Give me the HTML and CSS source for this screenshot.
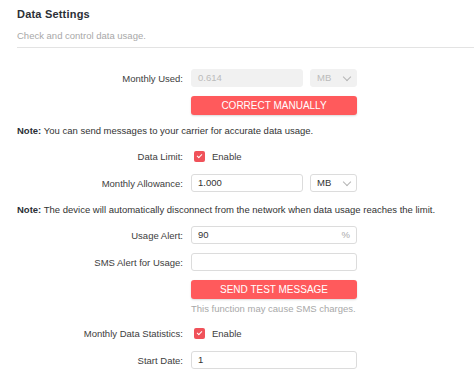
FILE: index.html
```html
<!DOCTYPE html>
<html lang="en">
<head>
    <meta charset="UTF-8">
    <meta name="viewport" content="width=device-width, initial-scale=1.0">
    <title>Data Settings</title>
    <link rel="stylesheet" href="styles.css">
</head>
<body>

    <!-- Header -->
    <div class="head">
        <h2>Data Settings</h2>
        <p class="sub">Check and control data usage.</p>
    </div>

    <div class="form">
        <div class="row">
            <label>Monthly Used:</label>
            <div class="ctrl">
                <div class="input small disabled">0.614</div>
                <div class="select disabled">MB <span class="chev"></span></div>
            </div>
        </div>
        <div class="row">
            <label></label>
            <div class="ctrl"><button class="button">CORRECT MANUALLY</button></div>
        </div>

        <p class="note note1"><b>Note:</b> You can send messages to your carrier for accurate data usage.</p>

        <div class="row">
            <label>Data Limit:</label>
            <div class="ctrl"><span class="check"></span> Enable</div>
        </div>
        <div class="row">
            <label>Monthly Allowance:</label>
            <div class="ctrl">
                <div class="input small">1.000</div>
                <div class="select">MB <span class="chev"></span></div>
            </div>
        </div>

        <p class="note note2"><b>Note:</b> The device will automatically disconnect from the network when data usage reaches the limit.</p>

        <div class="row">
            <label>Usage Alert:</label>
            <div class="ctrl"><div class="input">90 <span class="unit">%</span></div></div>
        </div>
        <div class="row">
            <label>SMS Alert for Usage:</label>
            <div class="ctrl"><div class="input"></div></div>
        </div>
        <div class="row">
            <label></label>
            <div class="ctrl"><button class="button">SEND TEST MESSAGE</button></div>
        </div>
        <div class="row hint-row">
            <label></label>
            <div class="ctrl hint">This function may cause SMS charges.</div>
        </div>

        <div class="row">
            <label>Monthly Data Statistics:</label>
            <div class="ctrl"><span class="check"></span> Enable</div>
        </div>
        <div class="row">
            <label>Start Date:</label>
            <div class="ctrl"><div class="input">1</div></div>
        </div>
    </div>

</body>
</html>
```

FILE: styles.css
```css
body {
    margin: 0;
    padding: 0 0 0 17px;
    background: #ffffff;
    font-family: "Liberation Sans", Arial, sans-serif;
    font-size: 9.5px;
    color: #333333;
}

/* header */
.head {
    border-bottom: 1px solid #e3e3e3;
    padding-top: 7px;
    height: 40px;
}
.head h2 {
    margin: 0;
    font-size: 11px;
    line-height: 14px;
    font-weight: bold;
    color: #2b2f36;
    letter-spacing: 0.2px;
}
.sub {
    margin: 8px 0 0;
    line-height: 14px;
    color: #a8a8a8;
}

/* form rows */
.form {
    display: flex;
    flex-direction: column;
    gap: 9px;
    padding-top: 21px;
}
.row {
    display: flex;
    align-items: center;
    height: 18px;
}
.row label {
    width: 166px;
    text-align: right;
    color: #3d3d3d;
}
.ctrl {
    margin-left: 8px;
    width: 166px;
    display: flex;
    align-items: center;
    gap: 7px;
    color: #3d3d3d;
}

.input {
    box-sizing: border-box;
    height: 18px;
    width: 166px;
    border: 1px solid #dcdcdc;
    border-radius: 3px;
    padding: 0 6px;
    line-height: 16px;
    color: #333333;
    display: flex;
    justify-content: space-between;
}
.input.small {
    width: 112px;
}
.input.disabled,
.select.disabled {
    background: #f1f1f1;
    border-color: #f1f1f1;
    color: #bbbbbb;
}
.unit {
    color: #aaaaaa;
}

.select {
    box-sizing: border-box;
    height: 18px;
    width: 47px;
    border: 1px solid #dcdcdc;
    border-radius: 3px;
    padding: 0 6px;
    line-height: 16px;
    color: #333333;
    display: flex;
    justify-content: space-between;
    align-items: center;
}
.chev {
    width: 5px;
    height: 5px;
    border-right: 1px solid #b5b5b5;
    border-bottom: 1px solid #b5b5b5;
    transform: rotate(45deg);
    margin-top: -3px;
}

.button {
    height: 19px;
    width: 167px;
    padding: 0;
    background: #ff5a5c;
    color: #ffffff;
    border: none;
    border-radius: 3px;
    font-family: inherit;
    font-size: 10px;
    box-shadow: 0 1px 2px rgba(0, 0, 0, 0.15);
}

.check {
    width: 11px;
    height: 11px;
    margin-left: 3px;
    border-radius: 2px;
    background: #f0525a;
    position: relative;
}
.check::after {
    content: "";
    position: absolute;
    left: 4px;
    top: 2px;
    width: 2px;
    height: 4px;
    border-right: 1.5px solid #ffffff;
    border-bottom: 1.5px solid #ffffff;
    transform: rotate(45deg);
}

.note {
    margin: 1px 0 0;
    line-height: 14px;
    color: #333333;
}
.note2 {
    margin-top: 2px;
}
.note b {
    color: #2b2f36;
}

.hint-row {
    height: 14px;
    margin-top: -6px;
}
.hint {
    color: #a8a8a8;
    white-space: nowrap;
}
```
